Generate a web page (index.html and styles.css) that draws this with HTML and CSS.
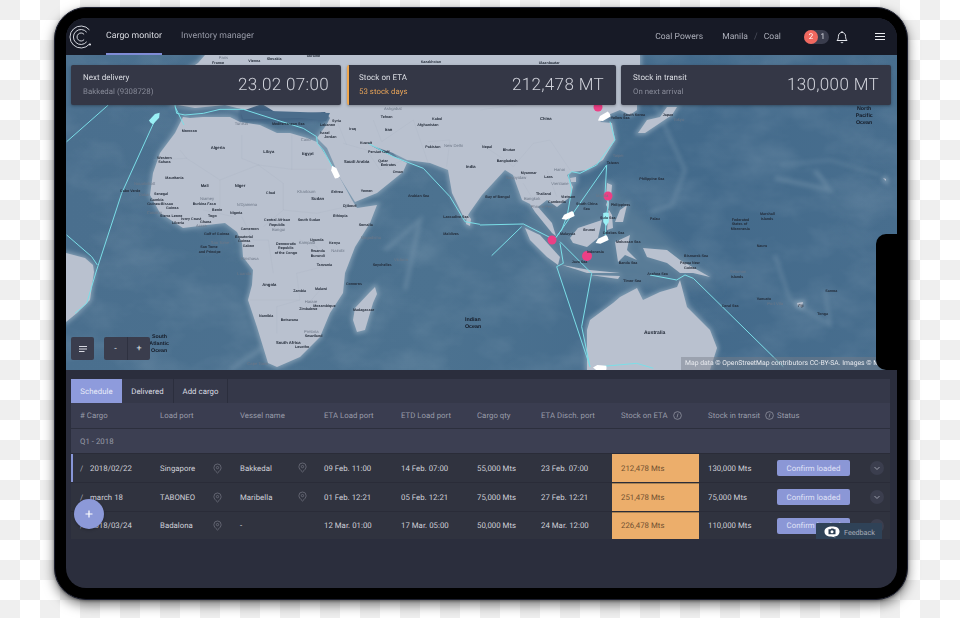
FILE: index.html
```html
<!DOCTYPE html>
<html lang="en">
<head>
<meta charset="utf-8">
<title>Cargo monitor</title>
<link rel="stylesheet" href="styles.css">
</head>
<body>
<main class="device">
<div class="screen">
  <header class="topbar">
    <svg class="logo" viewBox="0 0 24 24" width="24" height="24" fill="none" stroke="#e8eaf0" stroke-width=".9">
      <path d="M20.400 4.900A11 11 0 1 0 20.400 19.100"/>
      <path d="M17.700 7.200A7.500 7.500 0 1 0 17.700 16.800"/>
      <path d="M15.100 9.400A4 4 0 1 0 15.100 14.600"/>
      <circle cx="21" cy="19.500" r="1" fill="#e8eaf0" stroke="none"/>
    </svg>
    <nav class="tabs-main">
      <a class="nav-item nav-active">Cargo monitor</a>
      <a class="nav-item">Inventory manager</a>
    </nav>
    <div class="top-right">
      <span class="top-text company">Coal Powers</span>
      <span class="top-text">Manila</span>
      <span class="top-sep">/</span>
      <span class="top-text coal">Coal</span>
      <span class="badge"><span class="badge-red">2</span><span class="badge-num">1</span></span>
      <svg class="bell" viewBox="0 0 14 14" width="14" height="14" fill="none" stroke="#e6e8ee" stroke-width="1">
        <path d="M2 10.500c1-1 1.400-2 1.400-4C3.400 4 5 2.400 7 2.400s3.600 1.600 3.600 4.100c0 2 .4 3 1.400 4z"/>
        <path d="M5.800 12a1.300 1.300 0 0 0 2.400 0M7 1v1.400"/>
      </svg>
      <span class="burger"><i></i><i></i><i></i></span>
    </div>
  </header>

  <section class="map">
    <svg class="map-svg" viewBox="66 55 831 315" width="831" height="315">
      <defs>
        <linearGradient id="sea" x1="0" y1="0" x2="1" y2="0">
          <stop offset="0" stop-color="#4a6f8e"/>
          <stop offset=".45" stop-color="#4c7290"/>
          <stop offset=".75" stop-color="#436a8b"/>
          <stop offset="1" stop-color="#486e8e"/>
        </linearGradient>
        <filter id="soft" x="-10%" y="-10%" width="120%" height="120%"><feGaussianBlur stdDeviation="2"/></filter>
        <filter id="softer" x="-20%" y="-20%" width="140%" height="140%"><feGaussianBlur stdDeviation="5"/></filter>
        <filter id="grain" x="0" y="0" width="100%" height="100%">
          <feTurbulence type="fractalNoise" baseFrequency=".018 .028" numOctaves="4" seed="7"/>
          <feColorMatrix type="matrix" values="0 0 0 0 .78  0 0 0 0 .86  0 0 0 0 .92  1.600 0 0 0 -.62"/>
        </filter>
        <path id="ship" d="M-7 0L-3 -2.800L6 -2.800Q7 0 6 2.800L-3 2.800Z"/>
        <g id="land">
          <path d="M205 55L198 63L184 72L176 98L172 104L195 108L225 105L245 110L262 104L275 112L298 113L307 113L325 112L330 118L327 124L317 138L327 148L340 178L355 202L377 193L403 172L407 163L397 158L390 155L383 152L370 145L393 153L407 160L430 163L448 170L452 193L465 220L470 212L482 195L505 170L513 175L522 200L530 204L535 212L552 233L556 236L552 223L538 207L547 200L557 207L570 197L573 187L567 175L572 172L587 170L603 160L615 140L612 123L600 122L608 115L620 110L630 115L637 110L637 103L640 100L640 55Z"/>
          <path d="M183 117L175 133L160 153L153 173L150 195L160 213L183 228L207 225L225 223L237 232L242 243L243 257L253 270L252 285L248 300L257 327L268 363L277 367L300 357L320 337L330 313L343 293L345 273L355 247L370 223L377 205L357 208L352 200L340 178L327 157L317 142L307 138L290 133L277 133L260 125L240 122L230 117L203 117L190 118Z"/>
          <path d="M375 287L377 294L373 303L365 330L357 332L353 320L355 308L370 292Z"/>
          <path d="M66 253L85 258L93 265L94 272L90 300L77 313L66 322Z"/>
          <path d="M467 214L471 219L470 226L466 224Z"/>
          <path d="M638 133L647 120L660 117L667 107L677 107L672 115L660 123L645 133Z"/>
          <path d="M525 228L540 235L560 257L558 265L547 257L530 240Z"/>
          <path d="M562 265L590 270L620 273L587 273Z"/>
          <path d="M578 228L602 220L598 238L587 247L573 243L570 238Z"/>
          <path d="M615 242L630 235L627 250L637 260L625 255L618 262Z"/>
          <path d="M607 183L612 185L611 197L606 196Z"/>
          <path d="M607 230L613 228L612 215L606 205L611 190L607 183L609 203Z"/>
          <path d="M620 210L627 205L623 222L615 222Z"/>
          <path d="M643 248L667 250L680 260L710 277L693 273L680 273L667 263L647 257Z"/>
          <path d="M590 275L620 276L618 279Z"/>
          <path d="M587 330L590 320L613 303L620 297L637 288L643 300L660 292L677 287L680 280L687 307L710 330L717 348L710 370L587 370Z"/>
          <path d="M570 178L576 177L576 182L571 182Z"/>
          <path d="M797 303L803 302L802 307L798 306Z"/>
          <path d="M883 178L886 179L886 181Z"/>
        </g>
      </defs>

      <rect x="66" y="55" width="831" height="315" fill="url(#sea)"/>
      <rect x="66" y="55" width="831" height="315" filter="url(#grain)" opacity=".14"/>
      <g fill="none" stroke="#7896ad" filter="url(#soft)" opacity=".5">
        <path d="M655 105L685 170L672 205L650 212" stroke-width="3"/>
        <path d="M780 165L830 160L880 175" stroke-width="2"/>
        <path d="M775 178L830 190L815 170" stroke-width="4"/>
        <path d="M775 255L790 300L830 325L825 290" stroke-width="3"/>
        <path d="M310 315L230 370" stroke-width="4"/>
        <path d="M385 250L420 220L405 290" stroke-width="4"/>
      </g>
      <use href="#land" fill="#7e9ab0" stroke="#7e9ab0" stroke-width="4" filter="url(#soft)"/>
      <path d="M525 215L600 180L660 230L720 290L640 285L560 280Z" fill="#5d7f99" filter="url(#softer)" opacity=".7"/>
      <path d="M240 105L332 108L328 120L240 122Z" fill="#3f6181" filter="url(#soft)"/>
      <path d="M370 146L400 160L392 152Z" fill="#5f7f99"/>
      <use href="#land" fill="#b9c1cf"/>
      <path d="M240 110L330 113L326 121L300 118L270 119L243 119Z" fill="#4a6c8b"/>

      <g fill="none" stroke="#a3acbb" stroke-width=".6">
        <g transform="translate(60 100) scale(.3333)">
          <path d="M360 150L380 175L480 240L595 195L670 250L670 330L610 380M595 195L695 208L800 208M545 105L545 175L595 195M695 105L695 208M380 175L280 180M480 240L480 330M430 330L520 350M545 350L580 420L625 420L640 520M670 330L770 340M720 420L770 440L790 500L710 520L720 600L650 620L650 700M770 340L860 320L875 300M570 600L720 600M790 560L745 610"/>
          <path d="M850 130L920 150L960 210L1030 180M860 135L830 60M940 60L965 125L1060 60L1105 190M1105 125L1170 120L1160 200"/>
        </g>
        <g transform="translate(480 100) scale(.3333)">
          <path d="M0 130L60 170L100 200L160 130L210 120L270 210M130 250L160 300M200 210L230 290M0 30L140 10"/>
        </g>
      </g>

      <g fill="none" stroke="#7adfe8" stroke-width="1" stroke-linejoin="round">
        <g transform="translate(60 100) scale(.3333)" stroke-width="3">
          <path d="M20 125L145 15M285 60L185 280L110 510L80 610L45 640M20 405L95 470L112 495M345 15L350 40L375 45L430 40L480 28L550 28L650 60L730 85L770 110L772 130L790 150L825 215M345 20L372 75M925 130L1000 170L1090 205L1170 290L1215 365L1260 373"/>
        </g>
        <g transform="translate(480 100) scale(.3333)" stroke-width="3">
          <path d="M0 375L130 372L215 415M35 467L125 380M222 420L245 390L262 345L275 270L265 225L275 215L300 220L350 195L405 120L390 65M230 410L380 195L375 285L385 310L378 360L375 420M240 425L335 520L305 680L330 800M240 430L250 490L230 500L330 800M510 525L590 540L615 525L640 535L910 800M360 800L470 790L520 805"/>
        </g>
      </g>

      <g fill="#ec3f85">
        <circle cx="598" cy="107" r="4.500"/>
        <circle cx="608" cy="196" r="4.500"/>
        <circle cx="552" cy="240" r="4.500"/>
        <circle cx="587" cy="256" r="5"/>
      </g>
      <use href="#ship" class="ship-cyan" transform="translate(155 118) rotate(132)"/>
      <use href="#ship" class="ship-white" transform="translate(335 172) rotate(65)"/>
      <use href="#ship" class="ship-white" transform="translate(604 117) rotate(-30)"/>
      <use href="#ship" class="ship-white" transform="translate(568 216) rotate(-25)"/>
      <use href="#ship" class="ship-cyan" transform="translate(606 219) rotate(-90)"/>
      <use href="#ship" class="ship-white" transform="translate(602 240) rotate(-25)"/>
      <use href="#ship" class="ship-white" transform="translate(600 368) rotate(5)"/>

      <g class="labels" transform="translate(60 100) scale(.3333)">
        <text x="365" y="97">Morocco</text><text x="452" y="146" class="b">Algeria</text><text x="610" y="158" class="b">Libya</text><text x="726" y="164" class="b">Egypt</text><text x="852" y="190" class="b">Saudi Arabia</text>
        <text x="292" y="177">Western</text><text x="295" y="190">Sahara</text><text x="316" y="236">Mauritania</text><text x="422" y="262" class="b">Mali</text><text x="524" y="261" class="b">Niger</text><text x="618" y="283">Chad</text>
        <text x="712" y="280" class="m">Khartoum</text><text x="754" y="299" class="b">Sudan</text><text x="814" y="279">Eritrea</text><text x="902" y="276">Yemen</text><text x="849" y="320">Djibouti</text>
        <text x="222" y="254" class="m">Nouakchott</text><text x="180" y="276">Cabo Verde</text><text x="236" y="289" class="m">Dakar</text><text x="282" y="284">Senegal</text><text x="270" y="302">Gambia</text><text x="262" y="316">Guinea-Bissau</text><text x="318" y="328">Guinea</text>
        <text x="420" y="300" class="m">Niamey</text><text x="398" y="314">Burkina Faso</text><text x="456" y="333">Benin</text><text x="444" y="350">Togo</text><text x="510" y="341">Nigeria</text><text x="530" y="317" class="m">N'Djamena</text>
        <text x="260" y="342" class="m">Conakry</text><text x="300" y="352">Sierra Leone</text><text x="364" y="359">Ivory Coast</text><text x="420" y="368">Ghana</text><text x="336" y="372">Liberia</text><text x="408" y="382" class="m">Accra</text>
        <text x="432" y="406">Gulf of Guinea</text><text x="542" y="389">Cameroon</text><text x="525" y="413">Equatorial</text><text x="534" y="427">Guinea</text><text x="548" y="442">Gabon</text><text x="452" y="433" class="m">Sao Tome</text><text x="421" y="445">Sao Tome</text><text x="416" y="460">and Principe</text>
        <text x="612" y="364">Central African</text><text x="628" y="377">Republic</text><text x="636" y="393" class="m">Bangui</text><text x="713" y="364">South Sudan</text><text x="819" y="350">Ethiopia</text><text x="896" y="379">Somalia</text><text x="902" y="416" class="m">Mogadishu</text>
        <text x="648" y="434">Democratic</text><text x="654" y="448">Republic</text><text x="644" y="462">of the Congo</text><text x="716" y="433" class="m">Kampala</text><text x="750" y="423">Uganda</text><text x="807" y="431">Kenya</text><text x="814" y="456" class="m">Nairobi</text><text x="752" y="455">Rwanda</text><text x="752" y="471">Burundi</text>
        <text x="770" y="498">Tanzania</text><text x="938" y="499">Seychelles</text><text x="1002" y="482" class="m">Victoria</text><text x="544" y="480" class="m">Kinshasa</text><text x="532" y="525" class="m">Luanda</text><text x="607" y="558" class="b">Angola</text><text x="700" y="577">Zambia</text><text x="765" y="569">Malawi</text><text x="858" y="555">Comoros</text>
        <text x="734" y="608" class="m">Harare</text><text x="760" y="620">Mozambique</text><text x="718" y="631">Zimbabwe</text><text x="597" y="652">Namibia</text><text x="662" y="663">Botswana</text><text x="879" y="633">Madagascar</text>
        <text x="732" y="700" class="m">Pretoria</text><text x="734" y="710">Swaziland</text><text x="648" y="731" class="b">South Africa</text><text x="705" y="744">Lesotho</text><text x="562" y="796" class="m">Cape Town</text>
        <text x="276" y="713" class="o">South</text><text x="268" y="734" class="o">Atlantic</text><text x="273" y="755" class="o">Ocean</text>
        <text x="636" y="74">Mediterranean Sea</text><text x="524" y="76" class="m">Tunisia</text><text x="816" y="65">Syria</text><text x="780" y="78">Lebanon</text><text x="868" y="89">Iraq</text><text x="974" y="94" class="b">Iran</text><text x="722" y="124" class="m">Cairo</text><text x="780" y="103">Israel</text><text x="793" y="113">Jordan</text><text x="900" y="131">Kuwait</text><text x="924" y="159">Persian Gulf</text><text x="955" y="186">Qatar</text><text x="962" y="199">Emirates</text><text x="998" y="219">Oman</text>
        <text x="1044" y="290">Arabian Sea</text><text x="1218" y="205" class="b">India</text><text x="1072" y="79">Afghanistan</text><text x="1096" y="145">Pakistan</text><text x="1152" y="140" class="m">New Delhi</text><text x="1150" y="355">Laccadive Sea</text><text x="1150" y="405">Maldives</text>
        <text x="1215" y="664" class="o">Indian</text><text x="1215" y="685" class="o">Ocean</text>
      </g>
      <g class="labels" transform="translate(480 100) scale(.3333)">
        <text x="180" y="60" class="b">China</text><text x="6" y="144">Nepal</text><text x="68" y="154">Bhutan</text><text x="50" y="187">Bangladesh</text><text x="122" y="222">Myanmar</text><text x="78" y="236" class="m">Naypyidaw</text><text x="222" y="214" class="m">Hanoi</text><text x="193" y="234">Laos</text><text x="214" y="256" class="m">Vientiane</text><text x="168" y="285">Thailand</text><text x="243" y="293">Vietnam</text><text x="132" y="299" class="m">Bangkok</text><text x="204" y="310">Cambodia</text><text x="152" y="324" class="m">Phnom Penh</text>
        <text x="16" y="295">Bay of Bengal</text><text x="288" y="315">South China</text><text x="310" y="329">Sea</text><text x="240" y="406">Malaysia</text><text x="310" y="392">Brunei</text><text x="478" y="241">Philippine Sea</text><text x="348" y="290" class="m">Manila</text><text x="392" y="318">Philippines</text><text x="360" y="356">Sulu Sea</text><text x="368" y="403">Celebes Sea</text><text x="408" y="430">Moluccan Sea</text><text x="320" y="460">Indonesia</text><text x="275" y="488">Java Sea</text><text x="416" y="491">Banda Sea</text><text x="430" y="545">Timor Sea</text><text x="502" y="525">Arafura Sea</text><text x="600" y="493">Papua New</text><text x="612" y="507">Guinea</text><text x="612" y="472">Bismarck Sea</text><text x="750" y="518" class="m">Solomon</text><text x="752" y="533">Islands</text><text x="725" y="620">Coral Sea</text><text x="830" y="600">Vanuatu</text><text x="862" y="616" class="m">Port Vila</text><text x="955" y="622">Fiji</text><text x="1036" y="576">Samoa</text><text x="1012" y="644">Tonga</text>
        <text x="755" y="362">Federated</text><text x="755" y="376">States of</text><text x="752" y="390">Micronesia</text><text x="840" y="345">Marshall</text><text x="842" y="359">Islands</text><text x="830" y="441">Nauru</text><text x="510" y="361">Palau</text><text x="392" y="58">Yellow Sea</text><text x="430" y="47">South Korea</text><text x="548" y="49">Japan</text><text x="580" y="63" class="m">Tokyo</text><text x="398" y="172" class="m">Taipei</text><text x="380" y="192">Taiwan</text><text x="492" y="702" class="bb">Australia</text>
        <text x="1131" y="30" class="o">North</text><text x="1127" y="51" class="o">Pacific</text><text x="1128" y="72" class="o">Ocean</text>
      </g>
      <g class="labels" transform="translate(340 55) scale(.3333)">
        <text x="242" y="25">Kazakhstan</text><text x="596" y="28">Ulaanbaatar</text><text x="132" y="165" class="m">Ashgabat</text><text x="122" y="190">Tehran</text><text x="276" y="196">Kabul</text>
      </g>
      <g class="labels" transform="translate(40 0) scale(.3333)">
        <text x="536" y="178" class="m">Paris</text><text x="625" y="186">Vienna</text><text x="680" y="180">Slovakia</text><text x="516" y="193">France</text><text x="800" y="172">Ukraine</text>
      </g>
    </svg>

    <div class="cards">
      <article class="card">
        <div class="card-text"><div class="card-title">Next delivery</div><div class="card-sub">Bakkedal (9308728)</div></div>
        <div class="card-value">23.02 07:00</div>
      </article>
      <article class="card card-accent">
        <div class="card-text"><div class="card-title">Stock on ETA</div><div class="card-sub sub-orange">53 stock days</div></div>
        <div class="card-value">212,478 MT</div>
      </article>
      <article class="card">
        <div class="card-text"><div class="card-title">Stock in transit</div><div class="card-sub">On next arrival</div></div>
        <div class="card-value">130,000 MT</div>
      </article>
    </div>

    <div class="map-tools">
      <button class="tool tool-menu" aria-label="Legend">
        <svg viewBox="0 0 10 8" width="10" height="8" fill="none" stroke="#d8dae2" stroke-width="1"><path d="M1 1.500H9M1 4H9M1 6.500H6.500"/></svg>
      </button>
      <div class="zoom-group"><button class="tool-zoom">-</button><button class="tool-zoom">+</button></div>
    </div>
    <div class="attribution">Map data © OpenStreetMap contributors CC-BY-SA. Images © Ma</div>
  </section>

  <section class="panel">
    <div class="tabs">
      <button class="tab tab-active">Schedule</button>
      <button class="tab">Delivered</button>
      <button class="tab">Add cargo</button>
    </div>
    <div class="row row-head">
      <div class="cell">#&nbsp;Cargo</div><div class="cell">Load port</div><div class="cell">Vessel name</div><div class="cell">ETA Load port</div><div class="cell">ETD Load port</div><div class="cell">Cargo qty</div><div class="cell">ETA Disch. port</div>
      <div class="cell">Stock on ETA<svg class="info" viewBox="0 0 10 10" width="9" height="9"><circle cx="5" cy="5" r="4.300"/><path d="M5.600 2.800L4.500 7.200"/></svg></div>
      <div class="cell">Stock in transit<svg class="info" viewBox="0 0 10 10" width="9" height="9"><circle cx="5" cy="5" r="4.300"/><path d="M5.600 2.800L4.500 7.200"/></svg></div>
      <div class="cell">Status</div><div class="cell"></div>
    </div>
    <div class="row-group">Q1 - 2018</div>

    <div class="row row-body row-current">
      <div class="cell"><span class="edit">/</span>2018/02/22</div>
      <div class="cell cell-port">Singapore<svg class="pin pin-load" viewBox="0 0 10 12" width="9" height="11"><path d="M5 11C2.500 8.800 1 7 1 5a4 4 0 0 1 8 0C9 7 7.500 8.800 5 11z"/><circle cx="5" cy="5" r="1.300"/></svg></div>
      <div class="cell cell-port">Bakkedal<svg class="pin pin-vessel" viewBox="0 0 10 12" width="9" height="11"><path d="M5 11C2.500 8.800 1 7 1 5a4 4 0 0 1 8 0C9 7 7.500 8.800 5 11z"/><circle cx="5" cy="5" r="1.300"/></svg></div>
      <div class="cell">09 Feb. 11:00</div><div class="cell">14 Feb. 07:00</div><div class="cell">55,000 Mts</div><div class="cell">23 Feb. 07:00</div>
      <div class="cell cell-stock">212,478 Mts</div><div class="cell">130,000 Mts</div>
      <div class="cell"><button class="confirm">Confirm loaded</button></div>
      <div class="cell cell-more"><span class="more"><svg viewBox="0 0 8 8" width="8" height="8" fill="none" stroke="#9a9daa" stroke-width="1"><path d="M1.500 3L4 5.500L6.500 3"/></svg></span></div>
    </div>
    <div class="row row-body">
      <div class="cell"><span class="edit">/</span>march 18</div>
      <div class="cell cell-port">TABONEO<svg class="pin pin-load" viewBox="0 0 10 12" width="9" height="11"><path d="M5 11C2.500 8.800 1 7 1 5a4 4 0 0 1 8 0C9 7 7.500 8.800 5 11z"/><circle cx="5" cy="5" r="1.300"/></svg></div>
      <div class="cell cell-port">Maribella<svg class="pin pin-vessel" viewBox="0 0 10 12" width="9" height="11"><path d="M5 11C2.500 8.800 1 7 1 5a4 4 0 0 1 8 0C9 7 7.500 8.800 5 11z"/><circle cx="5" cy="5" r="1.300"/></svg></div>
      <div class="cell">01 Feb. 12:21</div><div class="cell">05 Feb. 12:21</div><div class="cell">75,000 Mts</div><div class="cell">27 Feb. 12:21</div>
      <div class="cell cell-stock">251,478 Mts</div><div class="cell">75,000 Mts</div>
      <div class="cell"><button class="confirm">Confirm loaded</button></div>
      <div class="cell cell-more"><span class="more"><svg viewBox="0 0 8 8" width="8" height="8" fill="none" stroke="#9a9daa" stroke-width="1"><path d="M1.500 3L4 5.500L6.500 3"/></svg></span></div>
    </div>
    <div class="row row-body row-last">
      <div class="cell"><span class="edit">/</span>2018/03/24</div>
      <div class="cell cell-port">Badalona<svg class="pin pin-load" viewBox="0 0 10 12" width="9" height="11"><path d="M5 11C2.500 8.800 1 7 1 5a4 4 0 0 1 8 0C9 7 7.500 8.800 5 11z"/><circle cx="5" cy="5" r="1.300"/></svg></div>
      <div class="cell">-</div>
      <div class="cell">12 Mar. 01:00</div><div class="cell">17 Mar. 05:00</div><div class="cell">50,000 Mts</div><div class="cell">24 Mar. 12:00</div>
      <div class="cell cell-stock">226,478 Mts</div><div class="cell">110,000 Mts</div>
      <div class="cell"><button class="confirm">Confirm loaded</button></div>
      <div class="cell cell-more"><span class="more"><svg viewBox="0 0 8 8" width="8" height="8" fill="none" stroke="#9a9daa" stroke-width="1"><path d="M1.500 3L4 5.500L6.500 3"/></svg></span></div>
    </div>

    <button class="fab" aria-label="Add">
      <svg viewBox="0 0 8 8" width="8" height="8" fill="none" stroke="#fff" stroke-width="1.200"><path d="M4 .5V7.500M.5 4H7.500"/></svg>
    </button>
    <div class="feedback">
      <svg viewBox="0 0 16 12" width="16" height="12"><path fill="#fff" d="M8 .5c4.200 0 7.500 1.300 7.500 5s-3 5-6 5l2.500 1-5-1C3 10.500.5 9 .5 5.500S3.800.5 8 .5z"/><path fill="#2c3f54" d="M4.500 3.200h2l.8-.8h2l.8.8h1.400v5H4.500z"/><circle cx="8" cy="5.700" r="1.500" fill="#fff"/></svg>
      <span>Feedback</span>
    </div>
  </section>
  <div class="notch"></div>
</div>
</main>
</body>
</html>
```
FILE: styles.css
```css
* { box-sizing: border-box; }
html, body { margin: 0; height: 618px; overflow: hidden; }
body {
  background-color: #fff;
  background-image: conic-gradient(#fff 25%, #efefef 0 50%, #fff 0 75%, #efefef 0);
  background-size: 40px 40px;
  padding: 7px 0 0 54px;
  font-family: Roboto, "Liberation Sans", sans-serif;
  text-rendering: geometricPrecision;
}
button { font-family: inherit; border: 0; padding: 0; text-rendering: inherit; }

.device {
  width: 854px;
  height: 593px;
  padding: 10px 10px 11px 11px;
  background: #000;
  border: 1px solid #1d2030;
  border-radius: 32px;
  box-shadow: 0 5px 12px rgba(0,0,0,.5), 0 1px 3px rgba(0,0,0,.4);
}
.screen {
  position: relative;
  width: 831px;
  height: 570px;
  border-radius: 20px;
  overflow: hidden;
  background: #2a2d3c;
  display: flex;
  flex-direction: column;
  filter: blur(.2px);
}

.topbar {
  height: 37px;
  flex: none;
  background: #171a26;
  display: flex;
  align-items: center;
  padding-left: 3px;
  color: #c9cbd3;
}
.logo { flex: none; }
.tabs-main { display: flex; height: 100%; margin-left: 13px; gap: 19px; }
.nav-item {
  height: 100%;
  display: flex;
  align-items: center;
  font-size: 8.700px;
  letter-spacing: .05px;
  color: #989ba8;
  border-bottom: 2px solid transparent;
}
.nav-active { color: #dcdee4; border-bottom-color: #7f8cd6; }
.top-right { margin-left: auto; display: flex; align-items: center; padding-right: 12px; height: 100%; }
.top-text { font-size: 8.500px; letter-spacing: .05px; color: #acafba; }
.company { margin-right: 19px; }
.top-sep { font-size: 9px; color: #4c4f5c; margin: 0 6px; }
.coal { margin-right: 23px; }
.badge {
  width: 25px;
  height: 14px;
  border-radius: 7px;
  background: #3a3d4d;
  display: flex;
  align-items: center;
  font-size: 8px;
  color: #d9dbe2;
}
.badge-red {
  width: 14px;
  height: 14px;
  border-radius: 50%;
  background: #f0685f;
  color: #fff;
  display: flex;
  align-items: center;
  justify-content: center;
}
.badge-num { margin-left: 2.500px; }
.bell { margin-left: 6px; }
.burger { margin-left: 26px; width: 10px; display: flex; flex-direction: column; gap: 1.500px; }
.burger i { display: block; height: 1.500px; background: #eceef2; }

.map {
  position: relative;
  flex: none;
  height: 315px;
  overflow: hidden;
  background: #4e7391;
}
.map-svg { display: block; }
.ship-cyan { fill: #9af0f5; }
.ship-white { fill: #fff; }
.labels text { font: bold 11px "Liberation Sans", sans-serif; fill: #232b38; }
.labels .b { font-size: 12.500px; }
.labels .bb { font-size: 15px; }
.labels .m { font-weight: normal; font-size: 12.500px; fill: #6d7787; }
.labels .o { font-size: 16px; fill: #161c28; }

.cards {
  position: absolute;
  top: 10px;
  left: 5px;
  display: flex;
  gap: 6px;
}
.card {
  width: 270px;
  height: 40px;
  background: #343746;
  border-radius: 2px;
  box-shadow: 0 1px 3px rgba(0,0,0,.3);
  display: flex;
  align-items: center;
  justify-content: space-between;
  padding: 0 12px;
}
.card-accent { width: 269px; border-left: 2px solid #eea64e; padding-left: 10px; }
.card + .card-accent + .card { width: 270px; margin-left: -1px; }
.card-title { font-size: 8px; letter-spacing: .05px; color: #dcdee4; margin-bottom: 4px; line-height: 10px; }
.card-sub { font-size: 7.800px; letter-spacing: .05px; color: #888b99; line-height: 10px; }
.sub-orange { color: #e8a458; }
.card-value { font-size: 17px; font-weight: 300; letter-spacing: .35px; color: #d0d2da; }

.map-tools {
  position: absolute;
  left: 5px;
  bottom: 10px;
  display: flex;
  gap: 10px;
}
.tool, .tool-zoom {
  height: 23px;
  background: #3a3d4d;
  color: #dfe1e7;
  display: flex;
  align-items: center;
  justify-content: center;
  font-size: 9px;
}
.tool { width: 23px; border-radius: 2px; }
.zoom-group { display: flex; border-radius: 2px; overflow: hidden; }
.tool-zoom { width: 23px; }
.tool-zoom + .tool-zoom { border-left: 1px solid #2e3140; }
.attribution {
  position: absolute;
  left: 615px;
  bottom: 0;
  width: 216px;
  height: 13px;
  padding-left: 4px;
  white-space: nowrap;
  overflow: hidden;
  background: rgba(120,125,135,.45);
  font-size: 6.800px;
  line-height: 13px;
  color: #e8eaef;
}

.panel {
  position: relative;
  flex: 1;
  padding: 9px 7px 0 5px;
  background: #2b2e3d;
}
.tabs { display: flex; height: 24px; background: #353849; }
.tab {
  width: 54px;
  background: transparent;
  color: #dcdee4;
  font-size: 7.800px;
  letter-spacing: .05px;
  border-right: 1px solid #2b2e3d;
}
.tab:nth-child(2) { width: 52px; }
.tab-active { width: 51px; background: #8e9bdc; color: #e9ecf9; border-right: 0; }
.row {
  display: grid;
  grid-template-columns: 80px 80px 84px 77px 76px 64px 80px 87px 69px 92px 30px;
  align-items: center;
}
.cell {
  padding-left: 9px;
  font-size: 7.800px;
  letter-spacing: .03px;
  white-space: nowrap;
  display: flex;
  align-items: center;
}
.row-head {
  height: 26px;
  background: #3a3d50;
  color: #999ca9;
  border-bottom: 1px solid #2c2f3d;
}
.row-group {
  height: 24px;
  padding-left: 9px;
  display: flex;
  align-items: center;
  background: #3c3f52;
  color: #999ca9;
  font-size: 7.800px;
  letter-spacing: .03px;
}
.row-body {
  height: 29px;
  background: #30333f;
  color: #d0d2da;
  border-top: 1px solid #2a2c38;
}
.row-last { height: 28px; }
.row-current { box-shadow: inset 2px 0 0 #8896d8; }
.edit { width: 10px; color: #a9acb6; }
.cell-port { justify-content: space-between; }
.pin { fill: none; stroke: #6d707c; stroke-width: .9; flex: none; }
.pin-load { margin-right: 9px; }
.pin-vessel { margin-right: 8px; margin-top: -2px; }
.info { fill: none; stroke: #999ca9; stroke-width: .8; margin-left: 5px; flex: none; }
.row-body .cell-stock {
  align-self: stretch;
  background: #ecae6b;
  color: #6f4f30;
}
.row-body + .row-body .cell-stock { box-shadow: inset 0 1px 0 #a58052; }
.confirm {
  width: 73px;
  height: 16px;
  border-radius: 2px;
  background: #8b97d6;
  color: #e0e3f6;
  font-size: 7.800px;
  letter-spacing: .03px;
}
.cell-more { padding-left: 10px; }
.more {
  width: 14px;
  height: 14px;
  border-radius: 50%;
  background: #3b3e4e;
  display: flex;
  align-items: center;
  justify-content: center;
}
.fab {
  position: absolute;
  left: 8px;
  top: 129px;
  width: 30px;
  height: 30px;
  border-radius: 50%;
  background: #8c99d8;
  display: flex;
  align-items: center;
  justify-content: center;
  box-shadow: 0 1px 3px rgba(0,0,0,.25);
}
.feedback {
  position: absolute;
  left: 750px;
  top: 153px;
  width: 66px;
  height: 16px;
  background: #2f4257;
  border-radius: 1px 1px 0 0;
  display: flex;
  align-items: center;
  padding: 2px 0 0 8px;
  gap: 4px;
  font-size: 7.200px;
  color: #a8adb8;
}
.notch {
  position: absolute;
  right: 0;
  top: 216px;
  width: 21px;
  height: 136px;
  background: #000;
  border-radius: 10px 0 0 10px;
}
```
